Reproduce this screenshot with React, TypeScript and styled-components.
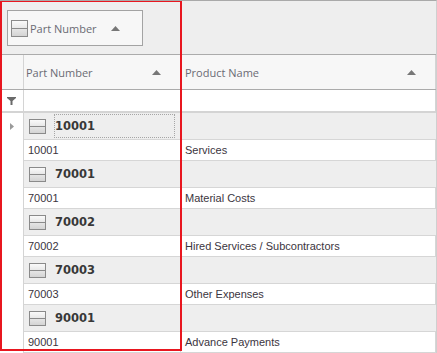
import React from 'react';
import styled, { createGlobalStyle } from 'styled-components';

interface Part {
  number: string;
  name: string;
}

const parts: Part[] = [
  { number: '10001', name: 'Services' },
  { number: '70001', name: 'Material Costs' },
  { number: '70002', name: 'Hired Services / Subcontractors' },
  { number: '70003', name: 'Other Expenses' },
  { number: '90001', name: 'Advance Payments' },
];

const GlobalStyle = createGlobalStyle`
  body {
    margin: 0;
    background: #ffffff;
  }
`;

const Grid = styled.div`
  position: relative;
  width: 437px;
  height: 353px;
  overflow: hidden;
  box-sizing: border-box;
  border-top: 1px solid #a9a9a9;
  border-right: 1px solid #cfcfcf;
  font-family: 'Liberation Sans', Arial, sans-serif;
`;

const GroupPanel = styled.div`
  height: 54px;
  box-sizing: border-box;
  padding: 9px 0 0 7px;
  background: #eeeeee;
  border-bottom: 1px solid #ababab;
`;

const GroupChip = styled.div`
  width: 136px;
  height: 36px;
  box-sizing: border-box;
  display: flex;
  align-items: center;
  padding: 0 0 0 3px;
  gap: 2px;
  background: #f7f7f7;
  border: 1px solid #a3a3a3;
`;

const HeaderLabel = styled.span`
  flex: 1;
  font-family: 'Open Sans', 'Noto Sans', sans-serif;
  font-size: 11px;
  color: #6b6b74;
`;

const SortSlot = styled.span<{ $right: number }>`
  display: flex;
  width: 9px;
  margin-right: ${(p) => p.$right}px;
`;

const HeaderRow = styled.div`
  display: grid;
  grid-template-columns: 24px 157px 1fr;
  height: 35px;
  box-sizing: border-box;
  background: #f7f7f7;
  border-bottom: 1px solid #ababab;
`;

const HeaderCell = styled.div<{ $pad: number }>`
  display: flex;
  align-items: center;
  padding-left: ${(p) => p.$pad}px;
  box-sizing: border-box;
  border-right: 1px solid #d4d4d4;
`;

const FilterRow = styled.div`
  display: grid;
  grid-template-columns: 24px 157px 1fr;
  height: 21px;
  background: #ffffff;
  border-bottom: 2px solid #d4d4d4;
`;

const IndicatorCell = styled.div`
  display: flex;
  align-items: center;
  justify-content: center;
  box-sizing: border-box;
  border-right: 1px solid #d4d4d4;
  background: #ffffff;
`;

const BlankCell = styled.div`
  box-sizing: border-box;
  border-right: 1px solid #d4d4d4;
`;

const Row = styled.div<{ $group?: boolean }>`
  display: grid;
  grid-template-columns: 24px 157px 1fr;
  height: ${(p) => (p.$group ? 27 : 21)}px;
`;

const GroupCell = styled.div`
  grid-column: 2 / 4;
  display: flex;
  align-items: center;
  padding-left: 5px;
  box-sizing: border-box;
  background: #eeeeee;
  border-bottom: 1px solid #d6d6d6;
`;

const GroupText = styled.div<{ $focused?: boolean }>`
  display: flex;
  align-items: center;
  width: 121px;
  height: 24px;
  margin-left: 8px;
  padding-left: 0;
  box-sizing: border-box;
  border: 1px dotted ${(p) => (p.$focused ? '#a6a6a6' : 'transparent')};
  font-family: 'DejaVu Sans', Tahoma, sans-serif;
  font-weight: bold;
  font-size: 11.5px;
  color: #383838;
`;

const DataCell = styled.div<{ $pad: number }>`
  display: flex;
  align-items: center;
  padding-left: ${(p) => p.$pad}px;
  box-sizing: border-box;
  border-right: 1px solid #d6d6d6;
  border-bottom: 1px solid #d6d6d6;
  font-size: 11px;
  color: #3b3540;
  white-space: nowrap;
`;

const Highlight = styled.div`
  position: absolute;
  left: 0;
  top: -1px;
  width: 182px;
  height: 351px;
  box-sizing: border-box;
  border: 2px solid #e8161f;
  pointer-events: none;
`;

const CollapseIcon = ({ h = 15 }: { h?: number }) => (
  <svg width="17" height={h} viewBox={`0 0 17 ${h}`}>
    <defs>
      <linearGradient id={`cg${h}`} x1="0" y1="0" x2="0" y2="1">
        <stop offset="0" stopColor="#fbfbfb" />
        <stop offset="1" stopColor="#d2d2d2" />
      </linearGradient>
    </defs>
    <rect x="0.5" y="0.5" width="16" height={h - 1} fill={`url(#cg${h})`} stroke="#8a8a8a" />
    <line x1="1" x2="16" y1={Math.floor(h / 2) + 0.5} y2={Math.floor(h / 2) + 0.5} stroke="#8a8a8a" />
  </svg>
);

const SortUp = () => (
  <svg width="9" height="5" viewBox="0 0 9 5">
    <path d="M4.5 0 L9 5 L0 5 Z" fill="#777777" />
  </svg>
);

const Funnel = () => (
  <svg width="9" height="8" viewBox="0 0 9 8">
    <path d="M0 0 H9 V1 L5.5 4 V8 H3.5 V4 L0 1 Z" fill="#6a6a6a" />
  </svg>
);

const RowArrow = () => (
  <svg width="4" height="7" viewBox="0 0 4 7">
    <path d="M0 0 L4 3.5 L0 7 Z" fill="#9a9a9a" />
  </svg>
);

export default function App() {
  return (
    <>
      <GlobalStyle />
      <Grid>
        <GroupPanel>
          <GroupChip>
            <CollapseIcon h={17} />
            <HeaderLabel>Part Number</HeaderLabel>
            <SortSlot $right={22}>
              <SortUp />
            </SortSlot>
          </GroupChip>
        </GroupPanel>
        <HeaderRow>
          <BlankCell />
          <HeaderCell $pad={2}>
            <HeaderLabel>Part Number</HeaderLabel>
            <SortSlot $right={19}>
              <SortUp />
            </SortSlot>
          </HeaderCell>
          <HeaderCell $pad={4}>
            <HeaderLabel>Product Name</HeaderLabel>
            <SortSlot $right={19}>
              <SortUp />
            </SortSlot>
          </HeaderCell>
        </HeaderRow>
        <FilterRow>
          <IndicatorCell>
            <Funnel />
          </IndicatorCell>
          <BlankCell />
          <BlankCell />
        </FilterRow>
        {parts.map((p, i) => (
          <React.Fragment key={p.number}>
            <Row $group>
              <IndicatorCell>{i === 0 ? <RowArrow /> : null}</IndicatorCell>
              <GroupCell>
                <CollapseIcon />
                <GroupText $focused={i === 0}>{p.number}</GroupText>
              </GroupCell>
            </Row>
            <Row>
              <IndicatorCell />
              <DataCell $pad={4}>{p.number}</DataCell>
              <DataCell $pad={4}>{p.name}</DataCell>
            </Row>
          </React.Fragment>
        ))}
        <Highlight />
      </Grid>
    </>
  );
}
